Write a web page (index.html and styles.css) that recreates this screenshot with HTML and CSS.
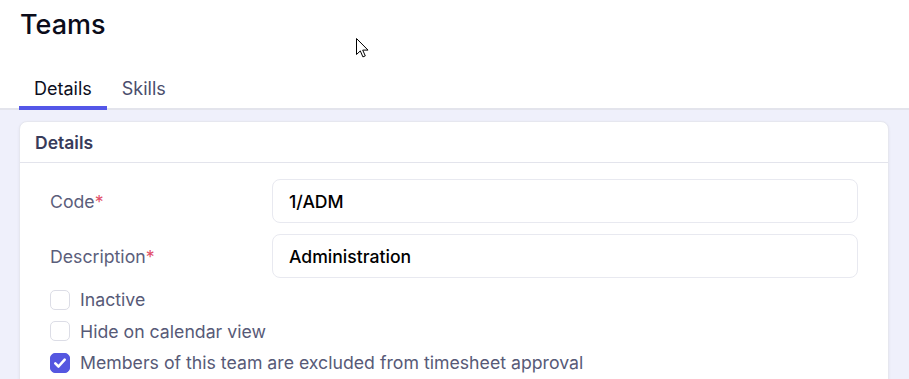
FILE: index.html
```html
<!DOCTYPE html>
<html lang="en">
<head>
    <meta charset="UTF-8">
    <meta name="viewport" content="width=device-width, initial-scale=1.0">
    <title>Teams</title>
    <link rel="stylesheet" href="styles.css">
</head>
<body>
    <header class="page-header">
        <h1>Teams</h1>
        <nav class="tabs">
            <a class="tab tab-active">Details</a>
            <a class="tab">Skills</a>
        </nav>
    </header>

    <main class="content">
        <section class="card">
            <div class="card-header">Details</div>
            <div class="card-body">
                <div class="field">
                    <label for="code" class="field-label">Code<span class="required">*</span></label>
                    <input type="text" id="code" class="field-input" value="1/ADM">
                </div>
                <div class="field">
                    <label for="description" class="field-label">Description<span class="required">*</span></label>
                    <input type="text" id="description" class="field-input" value="Administration">
                </div>

                <div class="checks">
                    <label class="check">
                        <span class="box"></span>
                        Inactive
                    </label>
                    <label class="check">
                        <span class="box"></span>
                        Hide on calendar view
                    </label>
                    <label class="check">
                        <span class="box box-checked">
                            <svg viewBox="0 0 20 20" width="20" height="20"><path d="M5.3 10.4l3.2 3.1 6.2-6.9" fill="none" stroke="#fff" stroke-width="2.6" stroke-linecap="round" stroke-linejoin="round"/></svg>
                        </span>
                        Members of this team are excluded from timesheet approval
                    </label>
                </div>
            </div>
        </section>
    </main>

    <svg class="cursor" viewBox="0 0 13 20" width="13" height="20">
        <path d="M0.5 0.5v16l3.8-3.6 2.6 6 2.4-1-2.6-5.8h5.3z" fill="#fff" stroke="#000" stroke-width="1" stroke-linejoin="miter"/>
    </svg>
</body>
</html>
```

FILE: styles.css
```css
body {
    margin: 0;
    font-family: Inter, "Noto Sans", sans-serif;
    background-color: #eff0fb;
    color: #111322;
    height: 379px;
    overflow: hidden;
    position: relative;
}

.page-header {
    background: white;
    padding: 8px 19px 0;
    border-bottom: 2px solid #e3e4ec;
}

h1 {
    margin: 0 0 35px 1px;
    font-size: 27px;
    font-weight: 500;
    line-height: 34px;
    color: #0b0c1a;
}

.tabs {
    display: flex;
}

.tab {
    padding: 0 15px 5px;
    font-size: 18px;
    line-height: 24px;
    color: #4b4e6d;
    border-bottom: 4px solid transparent;
    margin-bottom: -2px;
}

.tab-active {
    color: #0d0e1c;
    border-bottom-color: #5457e8;
}

.content {
    padding: 11px 20px 0 19px;
}

.card {
    background: white;
    border: 1px solid #e6e7ef;
    border-radius: 8px;
    box-shadow: 0 1px 3px rgba(30, 30, 80, 0.06);
}

.card-header {
    height: 40px;
    padding: 0 15px;
    display: flex;
    align-items: center;
    font-size: 17.5px;
    font-weight: 600;
    color: #383b5a;
    border-bottom: 1px solid #e3e4ec;
}

.card-body {
    padding: 16px 30px 20px;
}

.field {
    display: grid;
    grid-template-columns: 222px 1fr;
    align-items: center;
    margin-bottom: 11px;
}

.field-label {
    font-size: 17.7px;
    color: #5b5e7b;
}

.required {
    color: #e2506a;
}

.field-input {
    height: 44px;
    box-sizing: border-box;
    border: 1px solid #e8e9f0;
    border-radius: 8px;
    padding: 0 16px;
    font-family: inherit;
    font-size: 17.6px;
    font-weight: 500;
    color: #000;
    background: #fff;
    outline: none;
}

.checks {
    margin-top: -5px;
}

.check {
    display: flex;
    align-items: center;
    gap: 10px;
    height: 31.5px;
    font-size: 17.7px;
    color: #575a77;
}

.box {
    width: 20px;
    height: 20px;
    box-sizing: border-box;
    border: 1px solid #dcdde6;
    border-radius: 5px;
    background: #fff;
    display: flex;
}

.box-checked {
    background: #5557e0;
    border-color: #5557e0;
}

.box-checked svg {
    margin: -1px;
}

.cursor {
    position: absolute;
    left: 356px;
    top: 38px;
}
```
